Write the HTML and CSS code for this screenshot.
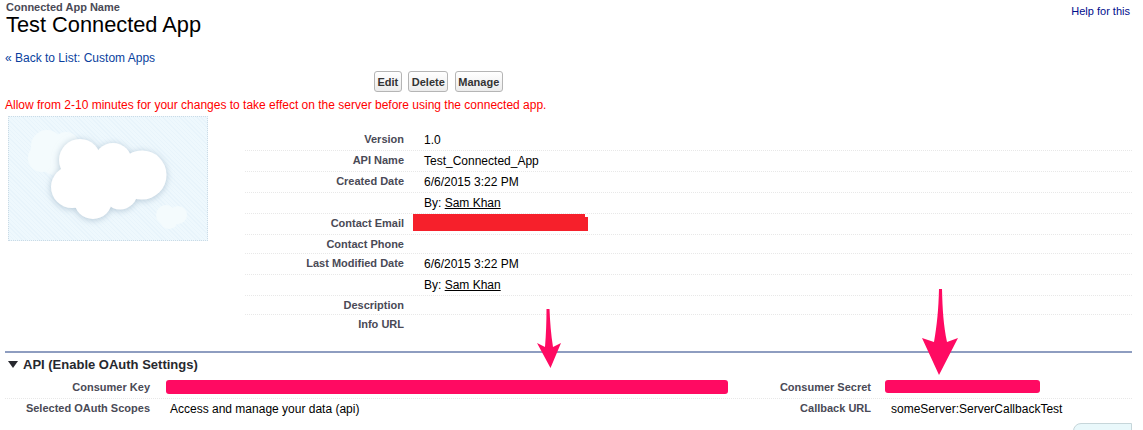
FILE: index.html
```html
<!DOCTYPE html>
<html lang="en">
<head>
<meta charset="utf-8">
<title>Test Connected App</title>
<link rel="stylesheet" href="styles.css">
</head>
<body>
<div class="page">
  <header class="header">
    <div>
      <h2 class="eyebrow">Connected App Name</h2>
      <h1 class="title">Test Connected App</h1>
    </div>
    <a class="help" href="#">Help for this</a>
  </header>
  <a class="back" href="#">« Back to List: Custom Apps</a>
  <div class="buttons">
    <button class="btn" type="button">Edit</button>
    <button class="btn" type="button">Delete</button>
    <button class="btn" type="button">Manage</button>
  </div>
  <p class="message">Allow from 2-10 minutes for your changes to take effect on the server before using the connected app.</p>
  <div class="detail">
    <div class="logo">
      <svg class="logo-art" width="198" height="123" viewBox="0 0 198 123">
        <defs>
          <filter id="soft" x="-20%" y="-20%" width="140%" height="140%">
            <feDropShadow dx="0" dy="1" stdDeviation="3.5" flood-color="#9fb6c8" flood-opacity="0.75"/>
          </filter>
        </defs>
        <g fill="#f4fbfd">
          <circle cx="38" cy="29" r="16"/>
          <circle cx="57" cy="28" r="13"/>
          <circle cx="33" cy="41" r="14"/>
          <circle cx="46" cy="44" r="14"/>
          <circle cx="157" cy="98" r="10"/>
          <circle cx="169" cy="98" r="9"/>
          <circle cx="160" cy="103" r="9"/>
        </g>
        <g fill="#fff" filter="url(#soft)">
          <circle cx="71" cy="43" r="21"/>
          <circle cx="104" cy="45" r="19"/>
          <circle cx="133" cy="58" r="24.5"/>
          <circle cx="63" cy="70" r="21"/>
          <circle cx="84" cy="83" r="19"/>
          <circle cx="111" cy="75" r="17.5"/>
          <circle cx="95" cy="62" r="24"/>
        </g>
      </svg>
    </div>
    <div class="fields">
      <div class="row"><span class="label">Version</span><span class="value">1.0</span></div>
      <div class="row"><span class="label">API Name</span><span class="value">Test_Connected_App</span></div>
      <div class="row"><span class="label">Created Date</span><span class="value">6/6/2015 3:22 PM</span></div>
      <div class="row"><span class="label"></span><span class="value">By: <a class="user" href="#">Sam Khan</a></span></div>
      <div class="row"><span class="label">Contact Email</span><span class="value">&nbsp;<span class="redact redact-email"></span></span></div>
      <div class="row"><span class="label">Contact Phone</span><span class="value"></span></div>
      <div class="row"><span class="label">Last Modified Date</span><span class="value">6/6/2015 3:22 PM</span></div>
      <div class="row"><span class="label"></span><span class="value">By: <a class="user" href="#">Sam Khan</a></span></div>
      <div class="row"><span class="label">Description</span><span class="value"></span></div>
      <div class="row row-last"><span class="label">Info URL</span><span class="value"></span></div>
    </div>
  </div>
  <section class="section">
    <h3 class="section-title"><span class="twisty"></span>API (Enable OAuth Settings)</h3>
    <div class="api-row">
      <span class="label">Consumer Key</span><span class="value">&nbsp;<span class="redact redact-key"></span></span>
      <span class="label">Consumer Secret</span><span class="value">&nbsp;<span class="redact redact-secret"></span></span>
    </div>
    <div class="api-row api-row-last">
      <span class="label">Selected OAuth Scopes</span><span class="value">Access and manage your data (api)</span>
      <span class="label">Callback URL</span><span class="value">someServer:ServerCallbackTest</span>
    </div>
  </section>
  <svg class="arrows" width="1143" height="430" viewBox="0 0 1143 430">
    <path fill="#ff0a62" d="M546.5 309 L549.5 309 C550 322 551 334 553 347 L561 343 L550.5 368 L537 343 L545 347 C546 334 546.5 322 546.5 309 Z"/>
    <path fill="#ff0a62" d="M939 289 L942 289 C942.5 310 943.5 325 947 342 L958 338 L939 375 L922 338 L934 342 C937 325 938.5 310 939 289 Z"/>
  </svg>
  <div class="corner-tab"></div>
</div>
</body>
</html>
```
FILE: styles.css
```css
* { box-sizing: border-box; }
html, body { margin: 0; padding: 0; background: #fff; }
body { font-family: "Liberation Sans", Arial, sans-serif; font-size: 12px; color: #000; }
a { text-decoration: none; }

.page { position: relative; width: 1143px; height: 430px; overflow: hidden; }

.header { display: flex; justify-content: space-between; align-items: flex-start; padding: 1px 13px 0 6px; }
.eyebrow { margin: 0; font-size: 11px; line-height: 13px; font-weight: bold; color: #4a4a56; }
.title { margin: 0; font-size: 21.8px; line-height: 21px; font-weight: normal; color: #000; }
.help { margin-top: 4px; font-size: 11px; line-height: 13px; color: #000d8c; }

.back { display: block; margin: 16px 0 0 5px; line-height: 15px; color: #0a3f9e; }

.buttons { display: flex; gap: 6.5px; margin: 5px 0 0 374px; }
.btn {
  min-width: 27px;
  height: 21px;
  padding: 0 2.5px;
  border: 1px solid #b5b5b5;
  border-radius: 3px;
  background: linear-gradient(#fff, #ececec);
  color: #333;
  font-family: inherit;
  font-size: 11px;
  font-weight: bold;
}

.message { margin: 6px 0 0 5px; line-height: 15px; color: #ff0000; }

.detail { display: flex; align-items: flex-start; margin: 3px 0 0 8px; padding-right: 11px; }
.logo {
  flex: none;
  width: 200px;
  height: 125px;
  border: 1px dotted #cbdbe6;
  background: repeating-linear-gradient(45deg, #e8f4fb 0 1px, #eef8fd 1px 3px);
}
.logo-art { display: block; }

.fields { flex: 1; margin: 14px 0 0 37px; }
.row {
  display: grid;
  grid-template-columns: 159px 1fr;
  column-gap: 20px;
  align-items: start;
  padding: 3px 0 2px;
  border-bottom: 1px dotted #e8e8e8;
}
.row-last { border-bottom: 0; }

.label { display: block; font-size: 11px; line-height: 13px; font-weight: bold; color: #4a4a56; text-align: right; }
.value { display: block; position: relative; line-height: 15px; color: #000; }
.user { color: #000; text-decoration: underline; }

.redact { position: absolute; display: block; }
.redact-email { left: -11px; top: 0; width: 175px; height: 14px; background: #f6202b; }
.redact-email::before { content: ""; position: absolute; left: 0; top: -3px; width: 172px; height: 3px; background: #f6202b; }
.redact-key { left: -4px; top: -1px; width: 562px; height: 14px; border-radius: 3px; background: #ff0a62; }
.redact-secret { left: -6px; top: -1px; width: 155px; height: 13px; border-radius: 3px; background: #ff0a62; }

.section { margin: 18px 11px 0 5px; border-top: 2px solid #8e9dc0; }
.section-title { display: flex; align-items: center; gap: 5px; height: 25px; margin: 0; padding: 0 0 3px 3px; font-size: 13px; font-weight: bold; color: #27282e; }
.twisty { width: 0; height: 0; border-left: 5px solid transparent; border-right: 5px solid transparent; border-top: 7px solid #27282e; }

.api-row {
  display: grid;
  grid-template-columns: 145px 450px 231px 241px;
  column-gap: 20px;
  align-items: start;
  padding: 3px 0 2px;
  border-bottom: 1px dotted #e8e8e8;
}
.api-row-last { border-bottom: 0; }

.arrows { position: absolute; left: 0; top: 0; pointer-events: none; }
.corner-tab { position: absolute; left: 1073px; top: 423px; width: 59px; height: 20px; border: 1px solid #c6d6da; border-radius: 8px 0 0 0; background: #e9f8fb; }
```
